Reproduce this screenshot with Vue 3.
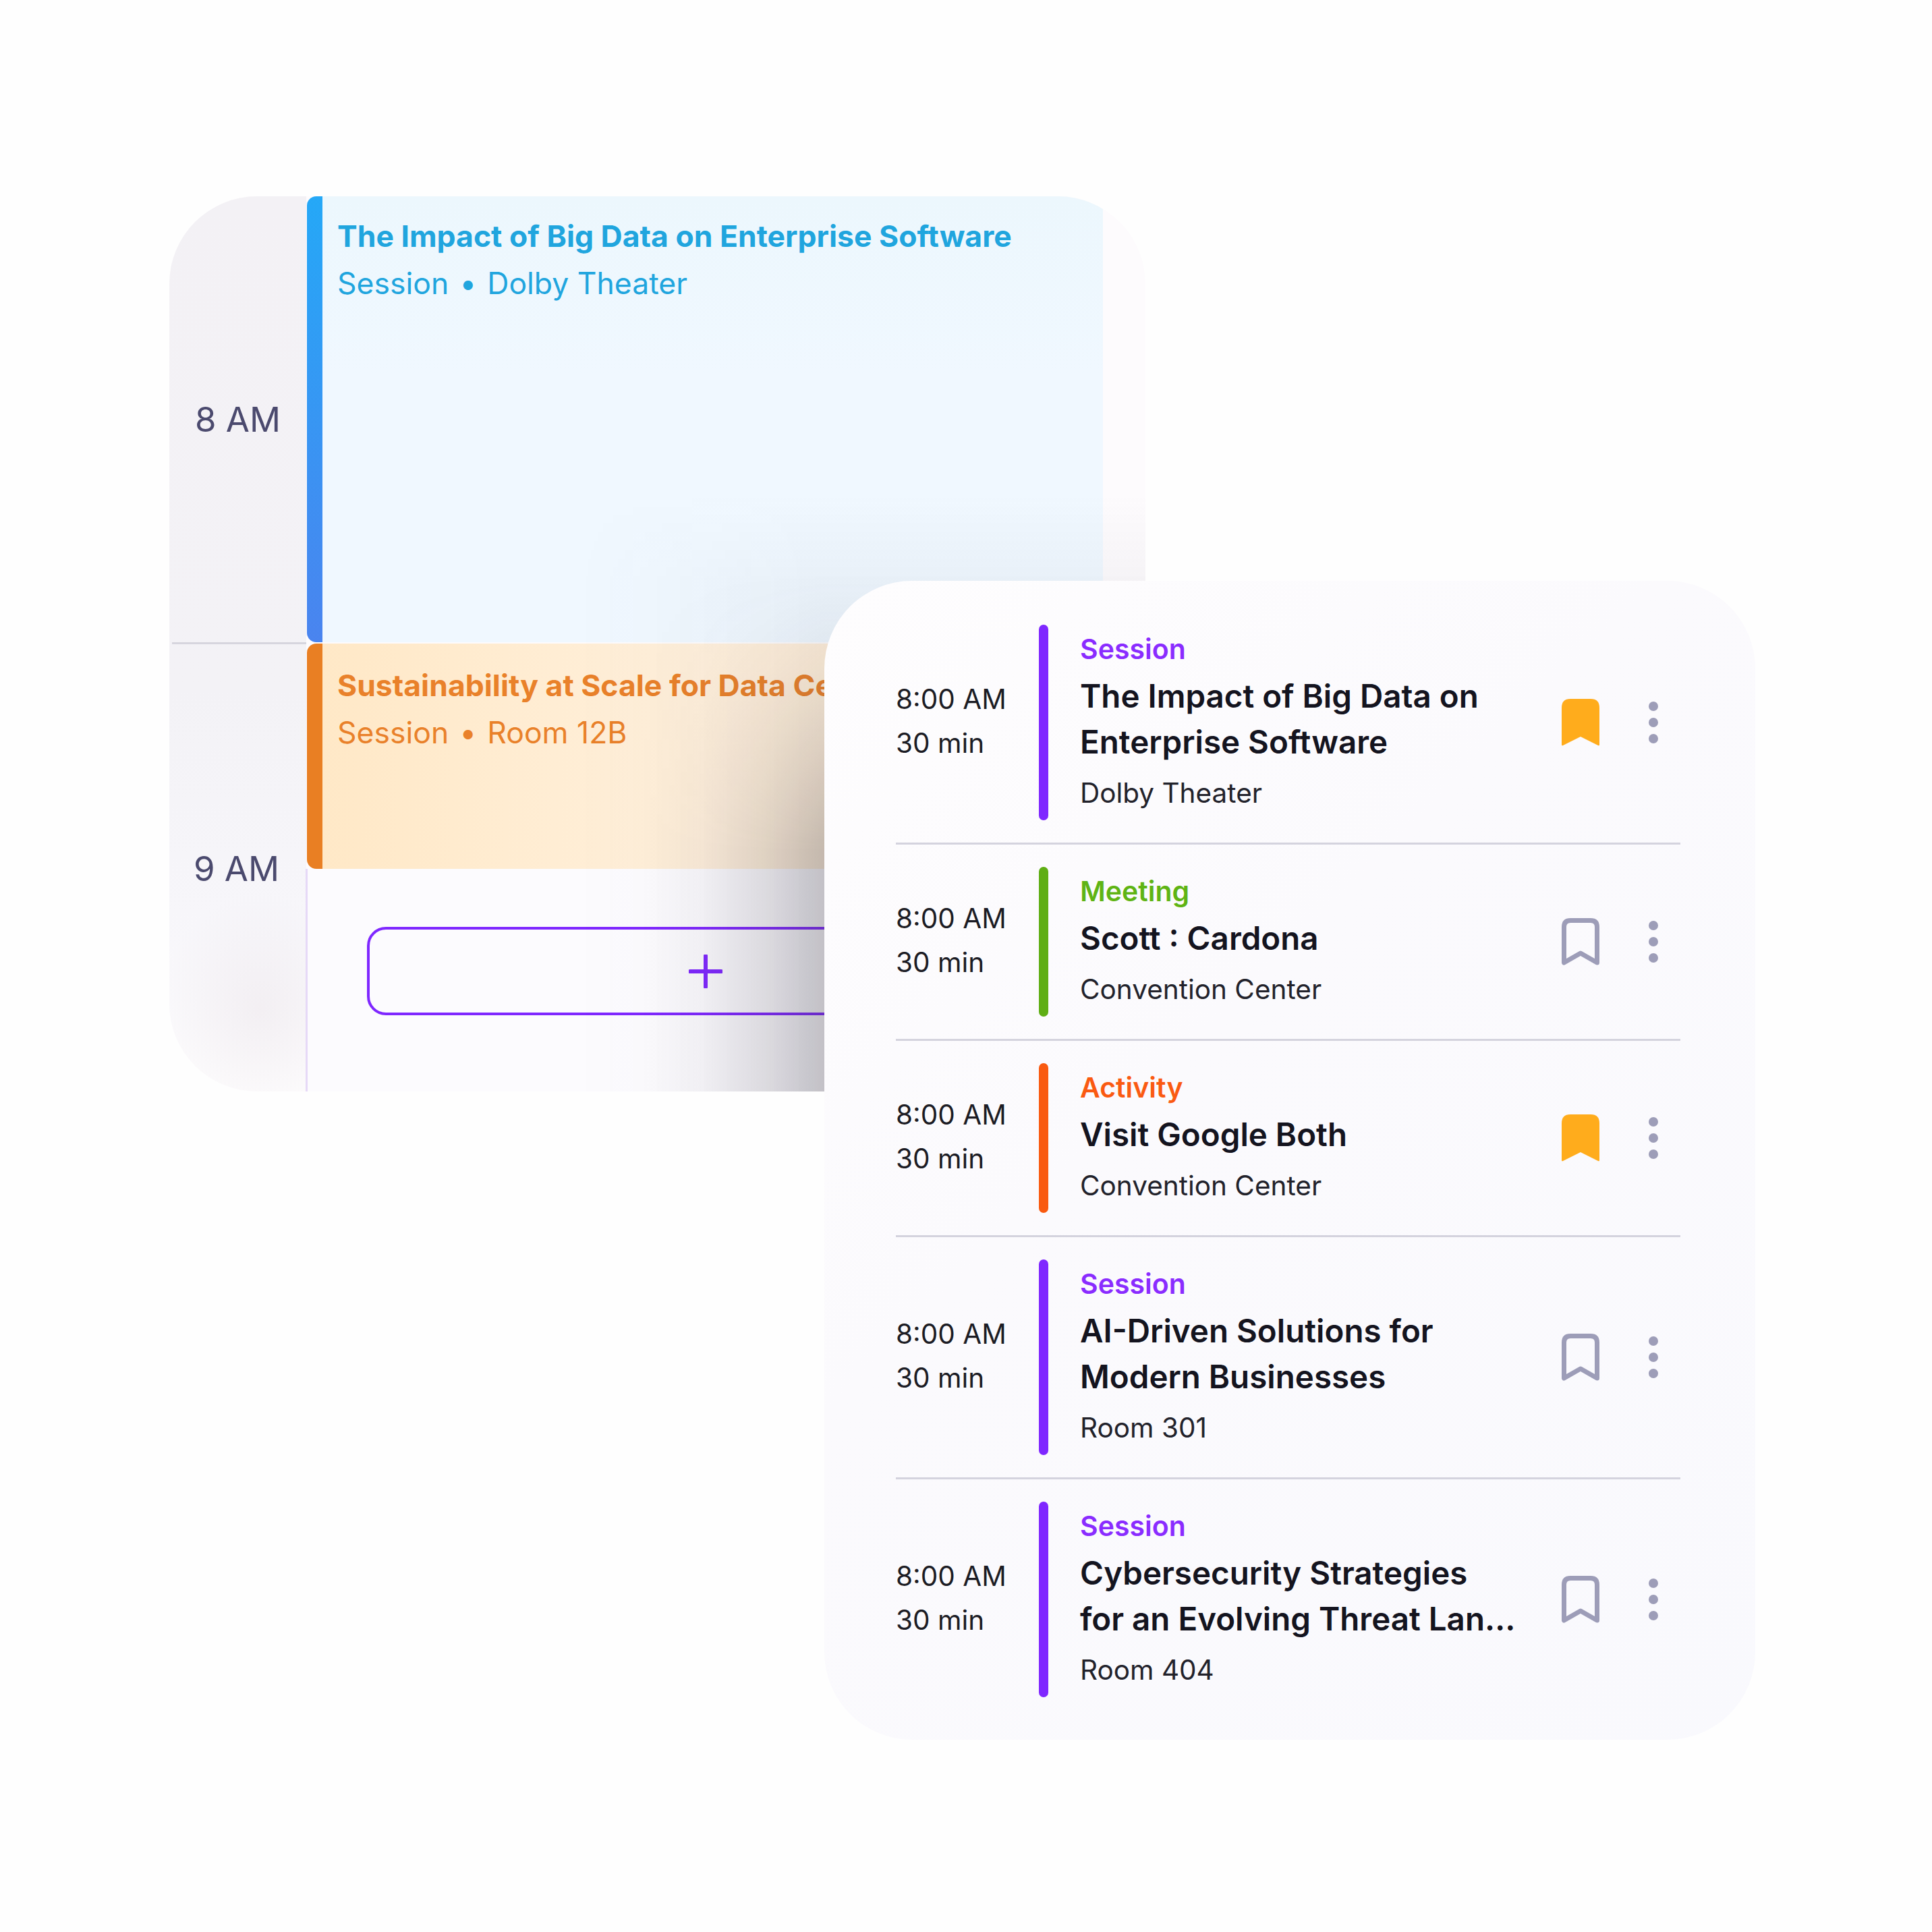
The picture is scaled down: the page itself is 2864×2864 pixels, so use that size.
<script setup>
const hours = ['8 AM', '9 AM']
const rows = [
  { kind: 'Session', tone: 'purple', title: ['The Impact of Big Data on', 'Enterprise Software'], place: 'Dolby Theater', saved: true },
  { kind: 'Meeting', tone: 'green', title: ['Scott : Cardona'], place: 'Convention Center', saved: false },
  { kind: 'Activity', tone: 'orange', title: ['Visit Google Both'], place: 'Convention Center', saved: true },
  { kind: 'Session', tone: 'purple', title: ['AI-Driven Solutions for', 'Modern Businesses'], place: 'Room 301', saved: false },
  { kind: 'Session', tone: 'purple', title: ['Cybersecurity Strategies', 'for an Evolving Threat Lan…'], place: 'Room 404', saved: false }
]
</script>

<template>
  <main class="stage">
    <section class="calendar">
      <div class="hours">
        <div v-for="h in hours" :key="h" class="hour">{{ h }}</div>
      </div>
      <div class="track">
        <article class="event blue">
          <h3>The Impact of Big Data on Enterprise Software</h3>
          <p>Session<i>•</i>Dolby Theater</p>
        </article>
        <article class="event amber">
          <h3>Sustainability at Scale for Data Centers</h3>
          <p>Session<i>•</i>Room 12B</p>
        </article>
        <div class="slot">
          <button class="add">
            <svg width="50" height="50" viewBox="0 0 50 50"><path d="M25 2v46M2 25h46" stroke="#7f27ff" stroke-width="6" stroke-linecap="round" fill="none" /></svg>
          </button>
        </div>
      </div>
      <div class="shade"></div>
      <div class="shade-top"></div>
    </section>

    <section class="agenda">
      <template v-for="(r, i) in rows" :key="i">
        <hr v-if="i" class="rule" />
        <article class="row">
          <div class="time">
            <span>8:00 AM</span>
            <span>30 min</span>
          </div>
          <div class="bar" :class="r.tone"></div>
          <div class="info">
            <div class="kind" :class="r.tone">{{ r.kind }}</div>
            <div class="title">
              <div v-for="t in r.title" :key="t">{{ t }}</div>
            </div>
            <div class="place">{{ r.place }}</div>
          </div>
          <svg class="mark" width="56" height="70" viewBox="0 0 56 70">
            <path v-if="r.saved" d="M0 13Q0 0 13 0H43Q56 0 56 13V68Q56 70 54 69L28 56L2 69Q0 70 0 68Z" fill="#ffac1c" />
            <path v-else d="M3.500 66V13Q3.500 3.500 13 3.500H43Q52.500 3.500 52.500 13V66L28 52L3.500 66Z" fill="none" stroke="#9d9db8" stroke-width="7" stroke-linejoin="round" />
          </svg>
          <div class="dots"><b></b><b></b><b></b></div>
        </article>
      </template>
    </section>
  </main>
</template>

<style>
html, body { margin: 0; background: #fff; }
</style>

<style scoped>
.stage {
  position: relative;
  width: 2864px;
  height: 2864px;
  overflow: hidden;
  background: #fefefe;
  font-family: Inter, "Noto Sans", sans-serif;
}
.calendar {
  position: absolute;
  left: 251px;
  top: 291px;
  width: 1447px;
  height: 1327px;
  display: flex;
  overflow: hidden;
  border-radius: 130px 130px 0 130px;
  background: #fdfbfd;
}
.hours {
  width: 203px;
  flex: none;
  display: flex;
  flex-direction: column;
  background:
    radial-gradient(ellipse 150px 170px at 135px 1205px, rgba(225, 215, 222, 0.3), rgba(225, 215, 222, 0)),
    linear-gradient(180deg, #f3f1f5 0%, #f3f2f6 55%, #f7f6fa 80%, #fdfcfd 100%);
}
.hour {
  flex: 1;
  display: flex;
  align-items: center;
  justify-content: center;
  padding-bottom: 3px;
  font-size: 51px;
  color: #4b4a6e;
}
.hour + .hour {
  position: relative;
  padding: 3px 4px 0 0;
}
.hour + .hour::before {
  content: "";
  position: absolute;
  left: 4px;
  right: 0;
  top: -3px;
  height: 3px;
  background: #d6d5de;
}
.track {
  flex: 1;
  display: flex;
  flex-direction: column;
  padding-left: 1px;
}
.event {
  margin-right: 63px;
  padding-left: 45px;
  box-sizing: border-box;
  border-radius: 14px 10px 10px 14px;
}
.event h3 {
  margin: 0;
  font-size: 44.500px;
  line-height: 60px;
  font-weight: 700;
  white-space: nowrap;
}
.event p {
  margin: 10px 0 0;
  font-size: 44.500px;
  line-height: 60px;
  white-space: nowrap;
}
.event i {
  font-style: normal;
  margin: 0 16px;
}
.blue {
  height: 661px;
  padding-top: 29px;
  color: #20a5de;
  background:
    linear-gradient(180deg, #25a8f7, #4a84ef) left / 23px 100% no-repeat,
    linear-gradient(180deg, #ecf7fd, #f0f8ff 40%);
}
.amber {
  margin-top: 2px;
  height: 334px;
  padding-top: 32px;
  color: #e9812a;
  background:
    linear-gradient(#e97f23, #e97f23) left / 23px 100% no-repeat,
    linear-gradient(90deg, #ffe8c6 0%, #fff0dc 50%, #ffefd6 100%);
}
.slot {
  flex: 1;
  margin-left: -2px;
  padding-top: 86px;
  padding-left: 88px;
  border-left: 3px solid #e6d9f7;
  background: #fcfbfe;
}
.add {
  display: flex;
  align-items: center;
  justify-content: center;
  box-sizing: border-box;
  width: 1004px;
  height: 131px;
  padding: 0;
  background: none;
  border: 4px solid #7f27ff;
  border-radius: 28px;
}
.shade {
  position: absolute;
  inset: 0;
  background: linear-gradient(90deg,
    rgba(60, 55, 70, 0) 700px,
    rgba(60, 55, 70, 0.04) 790px,
    rgba(60, 55, 70, 0.13) 880px,
    rgba(60, 55, 70, 0.27) 971px);
  -webkit-mask-image: linear-gradient(180deg, transparent 560px, rgba(0, 0, 0, 0.2) 700px, rgba(0, 0, 0, 0.6) 840px, #000 970px);
  mask-image: linear-gradient(180deg, transparent 560px, rgba(0, 0, 0, 0.2) 700px, rgba(0, 0, 0, 0.6) 840px, #000 970px);
  pointer-events: none;
}
.shade-top {
  position: absolute;
  inset: 0;
  background: linear-gradient(180deg, rgba(60, 60, 80, 0) 440px, rgba(60, 60, 80, 0.04) 570px);
  -webkit-mask-image: linear-gradient(90deg, transparent 600px, #000 950px);
  mask-image: linear-gradient(90deg, transparent 600px, #000 950px);
  pointer-events: none;
}
.agenda {
  position: absolute;
  left: 1222px;
  top: 861px;
  width: 1380px;
  height: 1718px;
  box-sizing: border-box;
  padding: 65px 111px 0 106px;
  border-radius: 130px;
  background: linear-gradient(135deg, #fefdfe 0%, #fbfafd 40%, #f9f9fd 100%);
}
.rule {
  margin: 33px 0;
  border: 0;
  height: 3px;
  background: #d4d3de;
}
.row {
  display: flex;
  align-items: center;
}
.time {
  width: 212px;
  flex: none;
  display: flex;
  flex-direction: column;
  gap: 18px;
  padding-bottom: 4px;
  font-size: 40.500px;
  line-height: 47px;
  color: #1c1c24;
}
.bar {
  align-self: stretch;
  width: 14px;
  flex: none;
  border-radius: 7px;
}
.bar.purple { background: #7f27ff; }
.bar.green { background: #5fae14; }
.bar.orange { background: #f95a10; }
.info {
  flex: 1;
  padding: 15px 0 14px 47px;
  white-space: nowrap;
}
.kind {
  font-size: 41px;
  line-height: 42px;
  font-weight: 600;
}
.kind.purple { color: #8a2cff; }
.kind.green { color: #5fb414; }
.kind.orange { color: #fa5a12; }
.title {
  margin-top: 15px;
  font-size: 47.500px;
  line-height: 68px;
  font-weight: 600;
  color: #14141f;
}
.place {
  margin-top: 16px;
  font-size: 40.500px;
  line-height: 52px;
  color: #22222b;
}
.mark { flex: none; margin-right: 73px; }
.dots {
  width: 14px;
  margin-right: 33px;
  flex: none;
  display: flex;
  flex-direction: column;
  gap: 10px;
}
.dots b {
  width: 14px;
  height: 14px;
  border-radius: 50%;
  background: #9d9db8;
}
</style>
